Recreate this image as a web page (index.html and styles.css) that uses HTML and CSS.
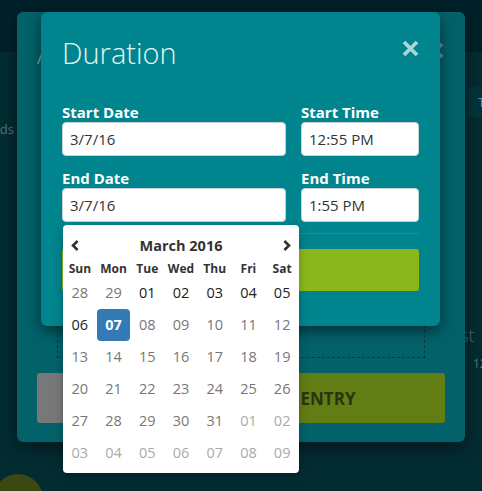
FILE: index.html
```html
<!DOCTYPE html>
<html lang="en">
<head>
<meta charset="utf-8">
<title>Duration</title>
<link rel="stylesheet" href="styles.css">
</head>
<body>
<div class="app">
  <header class="topbar"></header>
  <main class="content">
    <aside class="left-col">
      <div class="peek-text"><span>Boards</span></div>
      <div class="blob"></div>
    </aside>
    <aside class="right-col">
      <div class="tab"><span>T</span></div>
      <div class="peek-st">st</div>
      <div class="peek-num">12</div>
    </aside>
  </main>
</div>

<section class="card-back">
  <div class="back-header">
    <h2 class="back-title">Add Time Entry</h2>
    <svg class="back-close" width="17" height="17" viewBox="0 0 17 17"><path d="M2 2L15 15M15 2L2 15" stroke="currentColor" stroke-width="3.6" fill="none"/></svg>
  </div>
  <div class="dropzone"></div>
  <div class="back-actions">
    <button class="btn-cancel">CANCEL</button>
    <button class="btn-entry">SAVE ENTRY</button>
  </div>
</section>

<section class="modal">
  <div class="modal-header">
    <h1 class="modal-title">Duration</h1>
    <svg class="close" width="17" height="17" viewBox="0 0 17 17"><path d="M2 2L15 15M15 2L2 15" stroke="currentColor" stroke-width="3.8" fill="none"/></svg>
  </div>
  <div class="form-grid">
    <label class="field">
      <span class="field-label">Start Date</span>
      <input class="field-input" type="text" value="3/7/16">
    </label>
    <label class="field">
      <span class="field-label">Start Time</span>
      <input class="field-input" type="text" value="12:55 PM">
    </label>
    <div class="field end-date">
      <span class="field-label">End Date</span>
      <input class="field-input" type="text" value="3/7/16">
      <div class="datepicker">
        <div class="dp-head">
          <svg class="dp-arrow" width="8" height="11" viewBox="0 0 8 11"><path d="M6.6 1L2 5.5L6.6 10" stroke="#333" stroke-width="2.6" fill="none"/></svg>
          <span class="dp-month">March 2016</span>
          <svg class="dp-arrow" width="8" height="11" viewBox="0 0 8 11"><path d="M1.4 1L6 5.5L1.4 10" stroke="#333" stroke-width="2.6" fill="none"/></svg>
        </div>
        <div class="dp-grid">
          <span class="dow">Sun</span><span class="dow">Mon</span><span class="dow">Tue</span><span class="dow">Wed</span><span class="dow">Thu</span><span class="dow">Fri</span><span class="dow">Sat</span>
          <span class="day old">28</span><span class="day old">29</span><span class="day">01</span><span class="day">02</span><span class="day">03</span><span class="day">04</span><span class="day">05</span>
          <span class="day">06</span><span class="day active">07</span><span class="day off">08</span><span class="day off">09</span><span class="day off">10</span><span class="day off">11</span><span class="day off">12</span>
          <span class="day off">13</span><span class="day off">14</span><span class="day off">15</span><span class="day off">16</span><span class="day off">17</span><span class="day off">18</span><span class="day off">19</span>
          <span class="day off">20</span><span class="day off">21</span><span class="day off">22</span><span class="day off">23</span><span class="day off">24</span><span class="day off">25</span><span class="day off">26</span>
          <span class="day off">27</span><span class="day off">28</span><span class="day off">29</span><span class="day off">30</span><span class="day off">31</span><span class="day new">01</span><span class="day new">02</span>
          <span class="day new">03</span><span class="day new">04</span><span class="day new">05</span><span class="day new">06</span><span class="day new">07</span><span class="day new">08</span><span class="day new">09</span>
        </div>
      </div>
    </div>
    <label class="field">
      <span class="field-label">End Time</span>
      <input class="field-input" type="text" value="1:55 PM">
    </label>
  </div>
  <hr class="divider">
  <button class="btn-done">DONE</button>
</section>
</body>
</html>
```
FILE: styles.css
```css
* { box-sizing: border-box; }
html, body { margin: 0; padding: 0; }
body {
  width: 482px;
  height: 491px;
  overflow: hidden;
  background: #032c32;
  font-family: "Open Sans", "Noto Sans", sans-serif;
  position: relative;
}

/* background app */
.app { display: flex; flex-direction: column; height: 491px; overflow: hidden; }
.topbar { height: 52px; background: #01212a; flex: none; }
.content { flex: 1; display: flex; justify-content: space-between; min-height: 0; }
.left-col { width: 44px; display: flex; flex-direction: column; }
.peek-text {
  width: 14px; overflow: hidden; display: flex; justify-content: flex-end;
  margin-top: 68px; font-size: 13px; line-height: 18px; color: #557479; white-space: nowrap;
}
.blob {
  margin-top: auto; margin-left: -7px; margin-bottom: -33px;
  width: 50px; height: 50px; border-radius: 50%; background: #3c4812; flex: none;
}
.right-col { width: 22px; display: flex; flex-direction: column; align-items: flex-end; }
.tab {
  margin-top: 35px; width: 14px; height: 30px; background: #03343b; overflow: hidden;
  font-size: 13px; line-height: 30px; color: #6b878b; padding-left: 10px; white-space: nowrap;
}
.peek-st { margin-top: 208px; font-size: 18px; line-height: 20px; color: #4e6e72; width: 22px; font-weight: 300; }
.peek-num { margin-top: 12px; font-size: 12px; line-height: 14px; color: #5a7a7e; width: 9px; overflow: hidden; white-space: nowrap; }

/* back card */
.card-back {
  position: absolute; left: 17px; top: 12px; width: 448px;
  background: #03616a; border-radius: 6px;
  padding: 21px 20px 19px;
  box-shadow: 0 6px 18px rgba(0,0,0,0.45);
}
.back-header { display: flex; justify-content: space-between; align-items: flex-start; height: 40px; }
.back-title { margin: 0; font-weight: 300; font-size: 29px; line-height: 40px; color: #86a9ad; white-space: nowrap; }
.back-close { color: #6f9094; margin-top: 9px; margin-right: 1px; }
.dropzone { margin: 17px 20px 15px; height: 268px; border: 1px dashed #0d3a40; }
.back-actions { display: flex; gap: 8px; }
.back-actions button {
  height: 50px; border: none; border-radius: 3px; font-family: inherit;
  font-weight: 700; font-size: 17px; padding: 0;
}
.btn-cancel { width: 120px; background: #787878; color: #333; }
.btn-entry { flex: 1; background: #627d14; color: #2a3410; }

/* front modal */
.modal {
  position: absolute; left: 41px; top: 12px; width: 399px;
  background: #00848d; border-radius: 6px;
  padding: 21px 21px 35px;
  box-shadow: 0 5px 14px rgba(0,0,0,0.5);
  z-index: 2;
}
.modal-header { display: flex; justify-content: space-between; align-items: flex-start; height: 40px; }
.modal-title { margin: 0; font-weight: 300; font-size: 29px; line-height: 40px; color: #e6f4f4; }
.close { color: #a7d9db; margin-top: 7px; }
.form-grid {
  margin-top: 29px;
  display: grid; grid-template-columns: 224px 118px; column-gap: 15px; row-gap: 12px;
}
.field { display: flex; flex-direction: column; position: relative; }
.field-label { font-weight: 700; font-size: 15px; line-height: 20px; color: #ffffff; }
.field-input {
  height: 34px; border: 1px solid #c8d4d6; border-radius: 4px; background: #fff;
  padding: 0 7px; font-family: inherit; font-size: 15px; color: #333; width: 100%;
}
.divider { margin: 11px 0 0; border: 0; border-top: 1px solid #19939b; height: 0; }
.btn-done {
  margin-top: 15px; width: 100%; height: 42px; border: none; border-radius: 3px;
  background: #8bb71c; color: #fff; font-family: inherit; font-weight: 700; font-size: 16px;
}

/* datepicker dropdown */
.datepicker {
  position: absolute; left: 1px; top: 57px; width: 236px;
  background: #fff; border-radius: 4px; padding: 0 0 4px;
  box-shadow: 0 4px 10px rgba(0,0,0,0.25);
  z-index: 5;
  color: #333;
}
.dp-head {
  height: 36px; padding: 4px 8px 0; display: flex; align-items: center; justify-content: space-between;
}
.dp-month { font-weight: 700; font-size: 14.5px; }
.dp-grid { display: grid; grid-template-columns: repeat(7, 1fr); grid-template-rows: 16px repeat(6, 32px); }
.dp-grid .dow {
  font-weight: 700; font-size: 12px; line-height: 16px; text-align: center; color: #333;
}
.day { font-size: 14.5px; line-height: 32px; text-align: center; color: #222; border-radius: 4px; }
.day.old, .day.off { color: #777; }
.day.new { color: #aaa; }
.day.active { background: #337ab7; color: #fff; font-weight: 700; }
```
